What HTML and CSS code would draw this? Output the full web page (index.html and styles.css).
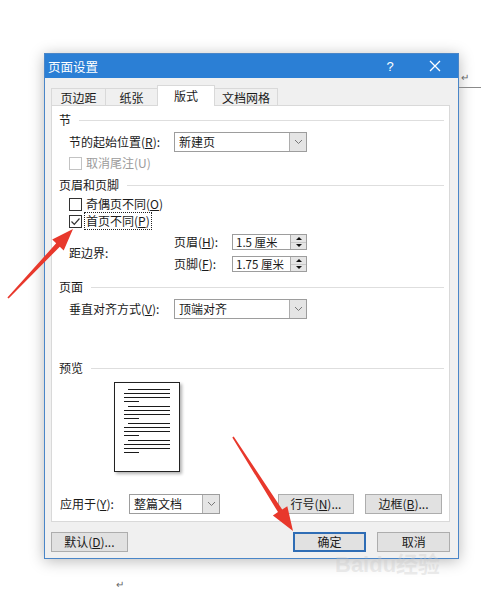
FILE: index.html
```html
<!DOCTYPE html>
<html lang="zh-CN">
<head>
<meta charset="utf-8">
<title>页面设置</title>
<link rel="stylesheet" href="styles.css">
</head>
<body>
<div class="doc-rule"></div>
<div class="doc-mark mark-a">↵</div>
<div class="doc-mark mark-b">↵</div>

<div class="dialog">
  <div class="titlebar">
    <span class="title">页面设置</span>
    <span class="tb-btn">?</span>
    <span class="tb-btn">
      <svg width="12" height="12" viewBox="0 0 12 12"><path d="M1 1 L11 11 M11 1 L1 11" stroke="#fff" stroke-width="1.3" fill="none"/></svg>
    </span>
  </div>
  <div class="dlg-body">
    <div class="tabs">
      <div class="tab t1">页边距</div>
      <div class="tab t2">纸张</div>
      <div class="tab t3 active">版式</div>
      <div class="tab t4">文档网格</div>
    </div>
    <div class="panel">
      <div class="group-h h-first">节</div>
      <div class="row">
        <span class="lbl">节的起始位置(<u>R</u>):</span>
        <div class="select sel-wide"><span class="val">新建页</span><span class="dd"><svg width="9" height="6" viewBox="0 0 9 6"><path d="M1 1 L4.5 4.5 L8 1" stroke="#777" fill="none"/></svg></span></div>
      </div>
      <div class="chk disabled r-endnote"><span class="box"></span><span>取消尾注(U)</span></div>

      <div class="group-h h-hf">页眉和页脚</div>
      <div class="chk r-odd"><span class="box"></span><span>奇偶页不同(<u>O</u>)</span></div>
      <div class="chk r-first"><span class="box checked"><svg width="11" height="11" viewBox="0 0 11 11"><path d="M1.5 5.5 L4.3 8.3 L9.5 2.5" stroke="#333" stroke-width="1.2" fill="none"/></svg></span><span class="focus">首页不同(<u>P</u>)</span></div>
      <div class="dist">
        <span class="lbl">距边界:</span>
        <div class="spins">
          <div class="spin-row">
            <span class="lbl2">页眉(<u>H</u>):</span>
            <div class="spin"><span class="val">1.5 厘米</span><span class="btns"><span class="sb"><i class="up"></i></span><span class="sb"><i class="down"></i></span></span></div>
          </div>
          <div class="spin-row">
            <span class="lbl2">页脚(<u>F</u>):</span>
            <div class="spin"><span class="val">1.75 厘米</span><span class="btns"><span class="sb"><i class="up"></i></span><span class="sb"><i class="down"></i></span></span></div>
          </div>
        </div>
      </div>

      <div class="group-h h-page">页面</div>
      <div class="row">
        <span class="lbl">垂直对齐方式(<u>V</u>):</span>
        <div class="select sel-wide"><span class="val">顶端对齐</span><span class="dd"><svg width="9" height="6" viewBox="0 0 9 6"><path d="M1 1 L4.5 4.5 L8 1" stroke="#777" fill="none"/></svg></span></div>
      </div>

      <div class="group-h h-prev">预览</div>
      <div class="preview">
        <div class="grp"><div class="ln ind"></div><div class="ln"></div><div class="ln"></div><div class="ln short"></div></div>
        <div class="grp"><div class="ln ind"></div><div class="ln"></div><div class="ln"></div><div class="ln short"></div></div>
        <div class="grp"><div class="ln ind"></div><div class="ln"></div><div class="ln"></div><div class="ln short"></div></div>
        <div class="grp"><div class="ln ind"></div><div class="ln"></div><div class="ln"></div><div class="ln short"></div></div>
      </div>

      <div class="apply">
        <span class="lbl3">应用于(<u>Y</u>):</span>
        <div class="select sel-apply"><span class="val">整篇文档</span><span class="dd"><svg width="9" height="6" viewBox="0 0 9 6"><path d="M1 1 L4.5 4.5 L8 1" stroke="#777" fill="none"/></svg></span></div>
        <div class="btn b-line">行号(<u>N</u>)...</div>
        <div class="btn b-border">边框(<u>B</u>)...</div>
      </div>
    </div>
    <div class="footer">
      <div class="btn b-default">默认(<u>D</u>)...</div>
      <div class="btn primary b-ok">确定</div>
      <div class="btn b-cancel">取消</div>
    </div>
  </div>
</div>

<div class="watermark">Baidu经验</div>

<svg class="arrows" width="481" height="597" viewBox="0 0 481 597">
  <polygon points="7.4,297.5 56.2,243.3 52.2,239.5 73,229 63.7,250.5 59.8,246.7 8.6,298.5" fill="#e8382c"/>
  <polygon points="232.3,437.4 278.0,512.1 272.9,515.4 293,531 287.3,506.2 282.2,509.5 233.7,436.6" fill="#e8382c"/>
</svg>
</body>
</html>
```

FILE: styles.css
```css
* { box-sizing: border-box; }

body {
  margin: 0;
  width: 481px;
  height: 597px;
  overflow: hidden;
  position: relative;
  background: #fff;
  font-family: "Noto Sans CJK SC", "Noto Sans", sans-serif;
  font-size: 12px;
  color: #1a1a1a;
}

u { text-decoration: underline; text-underline-offset: 1px; }

.doc-rule {
  position: absolute;
  left: 459px;
  top: 87px;
  width: 22px;
  height: 1px;
  background: #8a8a8a;
}
.doc-mark {
  position: absolute;
  font-size: 10px;
  color: #666;
  line-height: 10px;
}
.mark-a { left: 461px; top: 72px; }
.mark-b { left: 116px; top: 579px; }

.dialog {
  margin: 53px 0 0 44px;
  width: 415px;
  height: 506px;
  border: 1px solid #4a86c8;
  background: #f0f0f0;
  box-shadow: 0 2px 14px rgba(0, 0, 0, 0.28);
  display: flex;
  flex-direction: column;
}

.titlebar {
  height: 24px;
  background: #2b7fd5;
  color: #fff;
  display: flex;
  align-items: center;
  padding: 0 11px 0 3px;
  font-size: 12.5px;
}
.title { flex: 1; }
.tb-btn {
  width: 24px;
  height: 24px;
  display: flex;
  align-items: center;
  justify-content: center;
  font-family: "Liberation Sans", sans-serif;
  font-size: 13px;
}
.tb-btn + .tb-btn { margin-left: 21px; }

.dlg-body {
  padding: 7px 8px 0 6px;
}

.tabs {
  display: flex;
  align-items: flex-start;
  height: 21px;
  margin-bottom: -1px;
  position: relative;
  z-index: 1;
}
.tab {
  margin-top: 3px;
  height: 17px;
  border: 1px solid #d9d9d9;
  border-bottom: none;
  margin-right: -1px;
  background: #f0f0f0;
  display: flex;
  align-items: center;
  justify-content: center;
  line-height: 1;
  padding-top: 2px;
}
.t1 { width: 55px; }
.t2 { width: 53px; }
.t3 { width: 58px; }
.t4 { width: 64px; }
.tab.active {
  margin-top: 0;
  height: 21px;
  background: #fff;
  position: relative;
  z-index: 2;
  padding-top: 0;
  padding-bottom: 1px;
}

.panel {
  width: 399px;
  background: #fff;
  border: 1px solid #d9d9d9;
  padding: 0 5px 7px 7px;
}

.group-h {
  display: flex;
  align-items: center;
  height: 16px;
  line-height: 1;
}
.group-h::after {
  content: "";
  flex: 1;
  height: 1px;
  background: #dedede;
  margin-left: 8px;
}
.h-first { margin-top: 6px; }
.h-hf { margin-top: 7px; }
.h-page { margin-top: 7px; }
.h-prev { margin-top: 41px; }

.row {
  display: flex;
  align-items: center;
  height: 20px;
  margin: 4px 0 0 10px;
}
.lbl { width: 105px; line-height: 1; }

.select {
  height: 20px;
  border: 1px solid #9d9d9d;
  background: #fff;
  display: flex;
}
.select .val {
  flex: 1;
  padding-left: 4px;
  line-height: 18px;
  white-space: nowrap;
}
.select .dd {
  width: 17px;
  background: #e5e5e5;
  border-left: 1px solid #adadad;
  display: flex;
  align-items: center;
  justify-content: center;
}
.sel-wide { width: 133px; }
.sel-apply { width: 91px; }

.chk {
  display: flex;
  align-items: center;
  height: 14px;
  margin-left: 10px;
  line-height: 1;
}
.chk .box {
  width: 13px;
  height: 13px;
  border: 1px solid #333;
  background: #fff;
  margin-right: 4px;
  display: flex;
  align-items: center;
  justify-content: center;
}
.chk.disabled { color: #9b9b9b; }
.chk.disabled .box { border-color: #c3c3c3; }
.r-endnote { margin-top: 4px; }
.r-odd { margin-top: 4px; }
.r-first { margin-top: 3px; }
.focus {
  border: 1px dotted #222;
  padding: 2px 1px;
  margin-left: -2px;
}

.dist {
  display: flex;
  align-items: center;
  height: 38px;
  margin: 6px 0 0 10px;
}
.spins {
  display: flex;
  flex-direction: column;
  gap: 6px;
}
.spin-row {
  display: flex;
  align-items: center;
  height: 16px;
}
.lbl2 { width: 58px; line-height: 1; }
.spin {
  width: 75px;
  height: 16px;
  border: 1px solid #9d9d9d;
  display: flex;
  background: #fff;
}
.spin .val {
  flex: 1;
  padding-left: 3px;
  font-size: 11.5px;
  line-height: 14px;
  white-space: nowrap;
}
.spin .btns {
  width: 16px;
  flex: none;
  display: flex;
  flex-direction: column;
  border-left: 1px solid #adadad;
  background: #e5e5e5;
}
.sb {
  flex: 1;
  display: flex;
  align-items: center;
  justify-content: center;
}
.sb + .sb { border-top: 1px solid #c8c8c8; }
.sb i {
  width: 0;
  height: 0;
  border-left: 3px solid transparent;
  border-right: 3px solid transparent;
}
.sb i.up { border-bottom: 3px solid #111; }
.sb i.down { border-top: 3px solid #111; }

.preview {
  margin: 6px 0 0 55px;
  width: 66px;
  height: 90px;
  border: 1px solid #222;
  background: #fff;
  box-shadow: 2px 2px 3px rgba(0, 0, 0, 0.3);
  padding: 6px 9px 0 9px;
}
.grp { margin-bottom: 4px; }
.ln {
  height: 1px;
  background: #1a1a1a;
  margin-bottom: 3px;
}
.ln.ind { margin-left: 4px; }
.ln.short { width: 15px; }

.apply {
  display: flex;
  align-items: center;
  height: 20px;
  margin: 22px 0 0 1px;
}
.lbl3 { width: 69px; line-height: 1; }

.btn {
  height: 20px;
  border: 1px solid #adadad;
  background: #e1e1e1;
  display: flex;
  align-items: center;
  justify-content: center;
  line-height: 1;
}
.btn.primary { border: 2px solid #2f6db5; }
.b-line { width: 76px; margin-left: 58px; }
.b-border { width: 77px; margin-left: 11px; }

.footer {
  display: flex;
  margin-top: 10px;
  height: 20px;
}
.b-default { width: 77px; }
.b-ok { width: 74px; margin-left: 165px; }
.b-cancel { width: 73px; margin-left: 11px; }

.watermark {
  position: absolute;
  left: 335px;
  top: 546px;
  font-family: "Liberation Sans", "Noto Sans CJK SC", sans-serif;
  font-size: 22px;
  font-weight: bold;
  color: rgba(200, 200, 200, 0.35);
  pointer-events: none;
}

.arrows {
  position: absolute;
  left: 0;
  top: 0;
  pointer-events: none;
}
```
